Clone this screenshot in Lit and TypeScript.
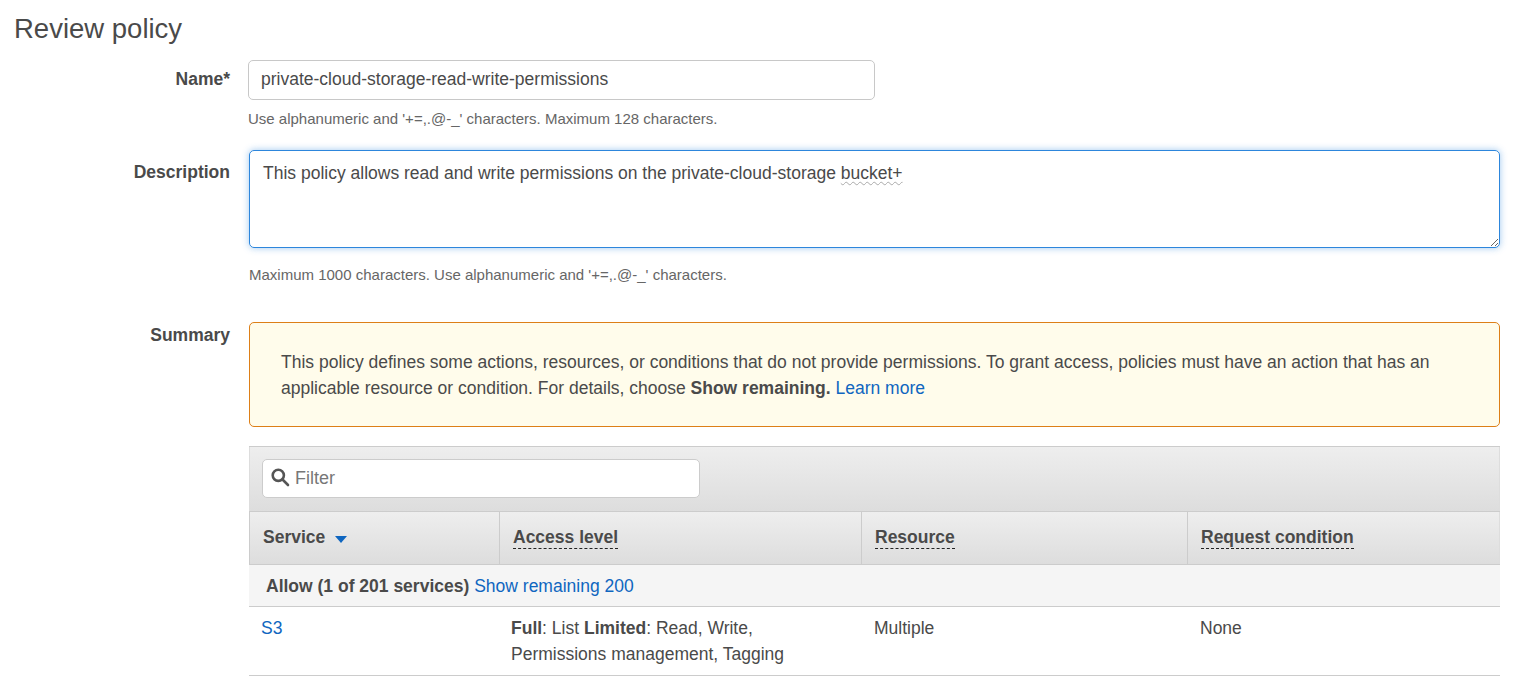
import { LitElement, html, css } from "lit";
import { customElement } from "lit/decorators.js";

const columns = [
  { label: "Access level" },
  { label: "Resource" },
  { label: "Request condition" },
];

@customElement("app-root")
export class AppRoot extends LitElement {
  static styles = css`
    :host {
      display: block;
      height: 689px;
      overflow: hidden;
      background: #fff;
      color: #4a4a4a;
      font-family: "Liberation Sans", Arial, sans-serif;
      font-size: 17.5px;
      line-height: 26px;
    }
    a {
      color: #0f66c0;
      text-decoration: none;
    }
    h1 {
      margin: 0;
      padding: 11px 0 0 14px;
      height: 60px;
      box-sizing: border-box;
      font-size: 27.5px;
      line-height: 36px;
      font-weight: 400;
    }
    .row {
      display: grid;
      grid-template-columns: 230px 1fr;
      column-gap: 18px;
      padding-right: 21px;
    }
    .label {
      text-align: right;
      font-weight: 700;
    }
    .name-label {
      padding-top: 6px;
    }
    .desc-label {
      padding-top: 9px;
    }
    .name-input {
      display: block;
      width: 627px;
      height: 40px;
      box-sizing: border-box;
      border: 1px solid #c8c8c8;
      border-radius: 5px;
      padding: 0 12px 1px;
      font: inherit;
      color: inherit;
      outline: none;
    }
    .hint {
      font-size: 15px;
      line-height: 18px;
      color: #666;
    }
    .name-hint {
      margin: 10px 0 22px;
    }
    .desc-col {
      padding-left: 1px;
    }
    .desc-box {
      height: 98px;
      box-sizing: border-box;
      border: 1px solid #2d86dc;
      border-radius: 5px;
      box-shadow: 0 0 7px rgba(45, 134, 220, 0.45);
      padding: 9px 13px;
      overflow: auto;
      resize: vertical;
    }
    .misspelt {
      text-decoration: underline wavy #aaa 1px;
      text-underline-offset: 2px;
    }
    .desc-hint {
      margin: 18px 0 38px;
    }
    .alert {
      box-sizing: border-box;
      height: 105px;
      padding: 26px 31px;
      border: 1px solid #dd7f17;
      border-radius: 5px;
      background: #fffceb;
    }
    .table {
      margin-top: 19px;
      border-top: 1px solid #ccc;
    }
    .toolbar {
      height: 64px;
      box-sizing: border-box;
      padding: 12px;
      border-left: 1px solid #ddd;
      border-right: 1px solid #ddd;
      background: linear-gradient(#eee, #ddd);
    }
    .filter {
      display: flex;
      align-items: center;
      gap: 5px;
      width: 438px;
      height: 39px;
      box-sizing: border-box;
      padding: 0 8px 2px;
      background: #fff;
      border: 1px solid #ccc;
      border-radius: 5px;
      color: #777;
      font-size: 18px;
    }
    .filter svg {
      flex: none;
    }
    .cols {
      display: grid;
      grid-template-columns: 250px 362px 326px 1fr;
    }
    .head {
      height: 52px;
      border-top: 1px solid #ccc;
      border-bottom: 1px solid #ccc;
      background: linear-gradient(#eee, #ddd);
    }
    .th {
      height: 52px;
      box-sizing: border-box;
      padding: 12px 13px 0;
      border-left: 1px solid #ccc;
      font-weight: 700;
    }
    .th:last-child {
      border-right: 1px solid #ddd;
    }
    .th span.tip {
      border-bottom: 1px dashed #222;
      padding-bottom: 1px;
    }
    .caret {
      display: inline-block;
      width: 0;
      height: 0;
      margin-left: 10px;
      border-left: 6px solid transparent;
      border-right: 6px solid transparent;
      border-top: 7px solid #0f66c0;
      vertical-align: 0;
    }
    .group {
      height: 42px;
      box-sizing: border-box;
      padding: 8px 17px;
      background: #f5f5f5;
      border-bottom: 1px solid #ccc;
    }
    .body {
      border-bottom: 1px solid #ccc;
      height: 69px;
      box-sizing: border-box;
      padding-top: 8px;
    }
    .td {
      padding: 0 12px;
    }
    .td:nth-child(n + 3) {
      padding: 0 13px;
    }
  `;

  render() {
    return html`
      <h1>Review policy</h1>
      <div class="row">
        <div class="label name-label">Name*</div>
        <div>
          <input class="name-input" .value=${"private-cloud-storage-read-write-permissions"} />
          <div class="hint name-hint">Use alphanumeric and '+=,.@-_' characters. Maximum 128 characters.</div>
        </div>
      </div>
      <div class="row">
        <div class="label desc-label">Description</div>
        <div class="desc-col">
          <div class="desc-box">This policy allows read and write permissions on the private-cloud-storage <span class="misspelt">bucket+</span></div>
          <div class="hint desc-hint">Maximum 1000 characters. Use alphanumeric and '+=,.@-_' characters.</div>
        </div>
      </div>
      <div class="row">
        <div class="label">Summary</div>
        <div class="desc-col">
          <div class="alert">
            This policy defines some actions, resources, or conditions that do not provide permissions. To grant access, policies must have an action that has an<br />applicable resource or condition. For details, choose <b>Show remaining.</b> <a href="#">Learn more</a>
          </div>
          <div class="table">
            <div class="toolbar">
              <div class="filter">
                <svg width="19" height="19" viewBox="0 0 19 19" fill="none" stroke="#555" stroke-width="2.6">
                  <circle cx="7.3" cy="7.3" r="5.6"></circle>
                  <path d="M11.5 11.5 L17 17" stroke-linecap="round"></path>
                </svg>
                Filter
              </div>
            </div>
            <div class="cols head">
              <div class="th">Service<i class="caret"></i></div>
              ${columns.map((c) => html`<div class="th"><span class="tip">${c.label}</span></div>`)}
            </div>
            <div class="group"><b>Allow (1 of 201 services)</b> <a href="#">Show remaining 200</a></div>
            <div class="cols body">
              <div class="td"><a href="#">S3</a></div>
              <div class="td"><b>Full</b>: List <b>Limited</b>: Read, Write,<br />Permissions management, Tagging</div>
              <div class="td">Multiple</div>
              <div class="td">None</div>
            </div>
          </div>
        </div>
      </div>
    `;
  }
}
